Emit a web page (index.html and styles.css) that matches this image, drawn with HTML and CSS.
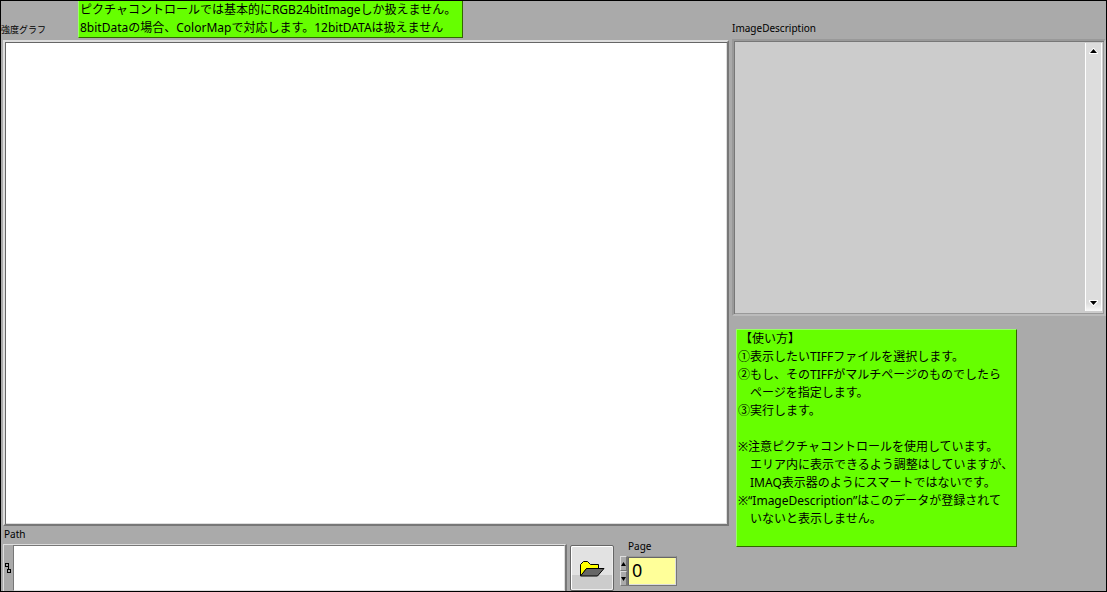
FILE: index.html
```html
<!DOCTYPE html>
<html lang="ja">
<head>
<meta charset="utf-8">
<title>TIFF Viewer</title>
<link rel="stylesheet" href="styles.css">
</head>
<body>
<main class="panel">
  <section class="viewer">
    <header class="viewer-head">
      <h2 class="label" id="graph-label">強度グラフ</h2>
      <p class="note note-top">ピクチャコントロールでは基本的にRGB24bitImageしか扱えません。<br>8bitDataの場合、ColorMapで対応します。12bitDATAは扱えません</p>
    </header>
    <div class="graph" role="img" aria-labelledby="graph-label"></div>
    <form class="controls">
      <div class="path-field">
        <label class="label" for="path">Path</label>
        <div class="path-box">
          <svg class="path-icon" viewBox="0 0 6 10" width="6" height="10" fill="none" stroke="#000" aria-hidden="true" shape-rendering="crispEdges"><path d="M.5 .5h3v3h-3zM3.5 3.5v3M2.5 6.5h3v3h-3z"/></svg>
          <input class="path-input" id="path" type="text">
        </div>
      </div>
      <button class="browse" type="button" aria-label="Browse">
        <svg viewBox="0 0 26 17" width="26" height="17" aria-hidden="true"><path d="M1.5 15.500V4.500L4.500 1.500H8.500L11.500 4.500H19.500V8.500H7.500L2.500 15.500Z" fill="#ff0" stroke="#000"/><path d="M7.500 8.500H25L18.500 16H1.500Z" fill="#666" stroke="#000"/></svg>
      </button>
      <div class="page-field">
        <label class="label" for="page">Page</label>
        <div class="page-row">
          <div class="spinner">
            <button type="button" aria-label="Increment"><svg viewBox="0 0 5 4" width="5" height="4"><path d="M0 4L2.500 0L5 4Z"/></svg></button>
            <button type="button" aria-label="Decrement"><svg viewBox="0 0 5 4" width="5" height="4"><path d="M0 0H5L2.500 4Z"/></svg></button>
          </div>
          <input class="page-input" id="page" type="text" inputmode="numeric" value="0">
        </div>
      </div>
    </form>
  </section>
  <section class="side">
    <label class="label" for="description">ImageDescription</label>
    <div class="description">
      <textarea class="description-text" id="description" readonly></textarea>
      <div class="scrollbar">
        <button type="button" aria-label="Scroll up"><svg viewBox="0 0 9 6" width="9" height="6"><path d="M0 5L4 0H5L9 5V6H0Z" fill="#fff"/><path d="M1 5L4.500 1L8 5Z"/></svg></button>
        <button class="scroll-down" type="button" aria-label="Scroll down"><svg viewBox="0 0 9 6" width="9" height="6"><path d="M0 0H9V2L5 6H4L0 2Z" fill="#fff"/><path d="M1 1H8L4.500 5Z"/></svg></button>
      </div>
    </div>
    <div class="note note-usage">&#8198;【使い方】
①表示したいTIFFファイルを選択します。
②もし、そのTIFFがマルチページのものでしたら
　ページを指定します。
③実行します。

※注意ピクチャコントロールを使用しています。
　エリア内に表示できるよう調整はしていますが、
　IMAQ表示器のようにスマートではないです。
※“ImageDescription”はこのデータが登録されて
　いないと表示しません。</div>
  </section>
</main>
</body>
</html>
```
FILE: styles.css
```css
* { box-sizing: border-box; }

body {
  margin: 0;
  background: #aaa;
  color: #000;
  font: 12px/18px "Noto Sans", "Noto Sans CJK JP", sans-serif;
}

button, input, textarea { font: inherit; color: inherit; margin: 0; padding: 0; border-radius: 0; }
button { display: flex; align-items: center; justify-content: center; }
svg { display: block; }

.panel {
  display: grid;
  grid-template-columns: minmax(0, 729fr) minmax(0, 376fr);
  min-height: 100vh;
  border: 1px solid #000;
}

.label {
  display: block;
  margin: 0;
  font-size: 10px;
  font-weight: 400;
  line-height: 12px;
}

.viewer { display: flex; flex-direction: column; padding: 0 1px 0 2px; }

.viewer-head { display: flex; align-items: flex-end; height: 39px; padding-bottom: 2px; }
.viewer-head .label { flex: 0 0 77px; margin: 0 0 2px -2px; font-size: 9px; }

.note {
  margin: 0;
  background: #6f0;
  border: 1px solid #9f6;
  border-right-color: #360;
  border-bottom-color: #360;
}
.note-top { padding: 0 6px 0 1px; border-top: 0; white-space: nowrap; }
.note-usage { width: fit-content; min-width: 281px; min-height: 218px; margin: 13px 0 0 4px; padding: 0 1px; white-space: pre; }

.graph {
  flex: 1;
  background: #fff;
  border: 2px solid;
  border-color: #ddd #777 #777 #ddd;
  box-shadow: inset 1px 1px #666, inset -1px -1px #ddd;
}

.controls { display: flex; align-items: flex-end; height: 65px; }

.path-field { flex: 1; }
.path-field .label { padding-left: 1px; margin-bottom: 4px; }
.path-box {
  display: flex;
  align-items: center;
  height: 47px;
  border: 1px solid #777;
  border-top-color: #ddd;
  border-left-color: #ddd;
  border-right-width: 2px;
  border-bottom: 0;
}
.path-icon { margin: 0 2px 0 1px; }
.path-input {
  flex: 1;
  min-width: 0;
  height: 100%;
  padding: 0 4px;
  border: 1px solid #777;
  border-right-color: #ddd;
  border-bottom-color: #ddd;
  background: #fff;
}

.browse {
  width: 44px;
  height: 46px;
  margin: 0 6px 0 3px;
  border: 1px solid #666;
  border-radius: 2px;
  background: linear-gradient(#e2e2e2 0 65%, #ccc 65%);
  box-shadow: inset 1px 1px #fff, inset -1px -1px #eee;
}

.page-field { margin-bottom: 5px; margin-right: 52px; }
.page-field .label { padding-left: 8px; margin-bottom: 4px; }
.page-row { display: flex; }
.spinner { display: flex; flex-direction: column; width: 7px; height: 30px; }
.spinner button {
  flex: 1;
  width: 7px;
  border: 1px solid #777;
  border-top-color: #ddd;
  border-left-color: #ddd;
  background: #aaa;
}
.spinner svg { flex: none; }
.page-input {
  width: 50px;
  height: 30px;
  padding: 0 0 2px 4px;
  border: 1px solid #777;
  border-top-color: #999;
  outline: 0;
  background: #ff9;
  box-shadow: inset 1px 1px #666, inset -1px -1px #ddd;
  font-size: 18px;
}

.side { display: flex; flex-direction: column; padding: 21px 0 0 2px; }

.description {
  display: flex;
  height: 277px;
  margin-top: 5px;
  border: 2px solid #999;
  border-right-color: #bbb;
  border-bottom-color: #bbb;
  box-shadow: inset 1px 1px #777, inset -1px -1px #999;
  background: #ccc;
  padding: 2px 2px 3px 2px;
}
.description-text { flex: 1; min-width: 0; border: 0; resize: none; background: transparent; overflow: hidden; }
.scrollbar {
  display: flex;
  flex-direction: column;
  justify-content: space-between;
  width: 17px;
  border: 1px solid #fff;
  border-top: 0;
  border-bottom: 0;
  background: #ddd;
}
.scrollbar button { height: 16px; border: 0; background: transparent; }
.scrollbar .scroll-down { background: linear-gradient(#ddd 0 50%, #f8f8f8); }
```
